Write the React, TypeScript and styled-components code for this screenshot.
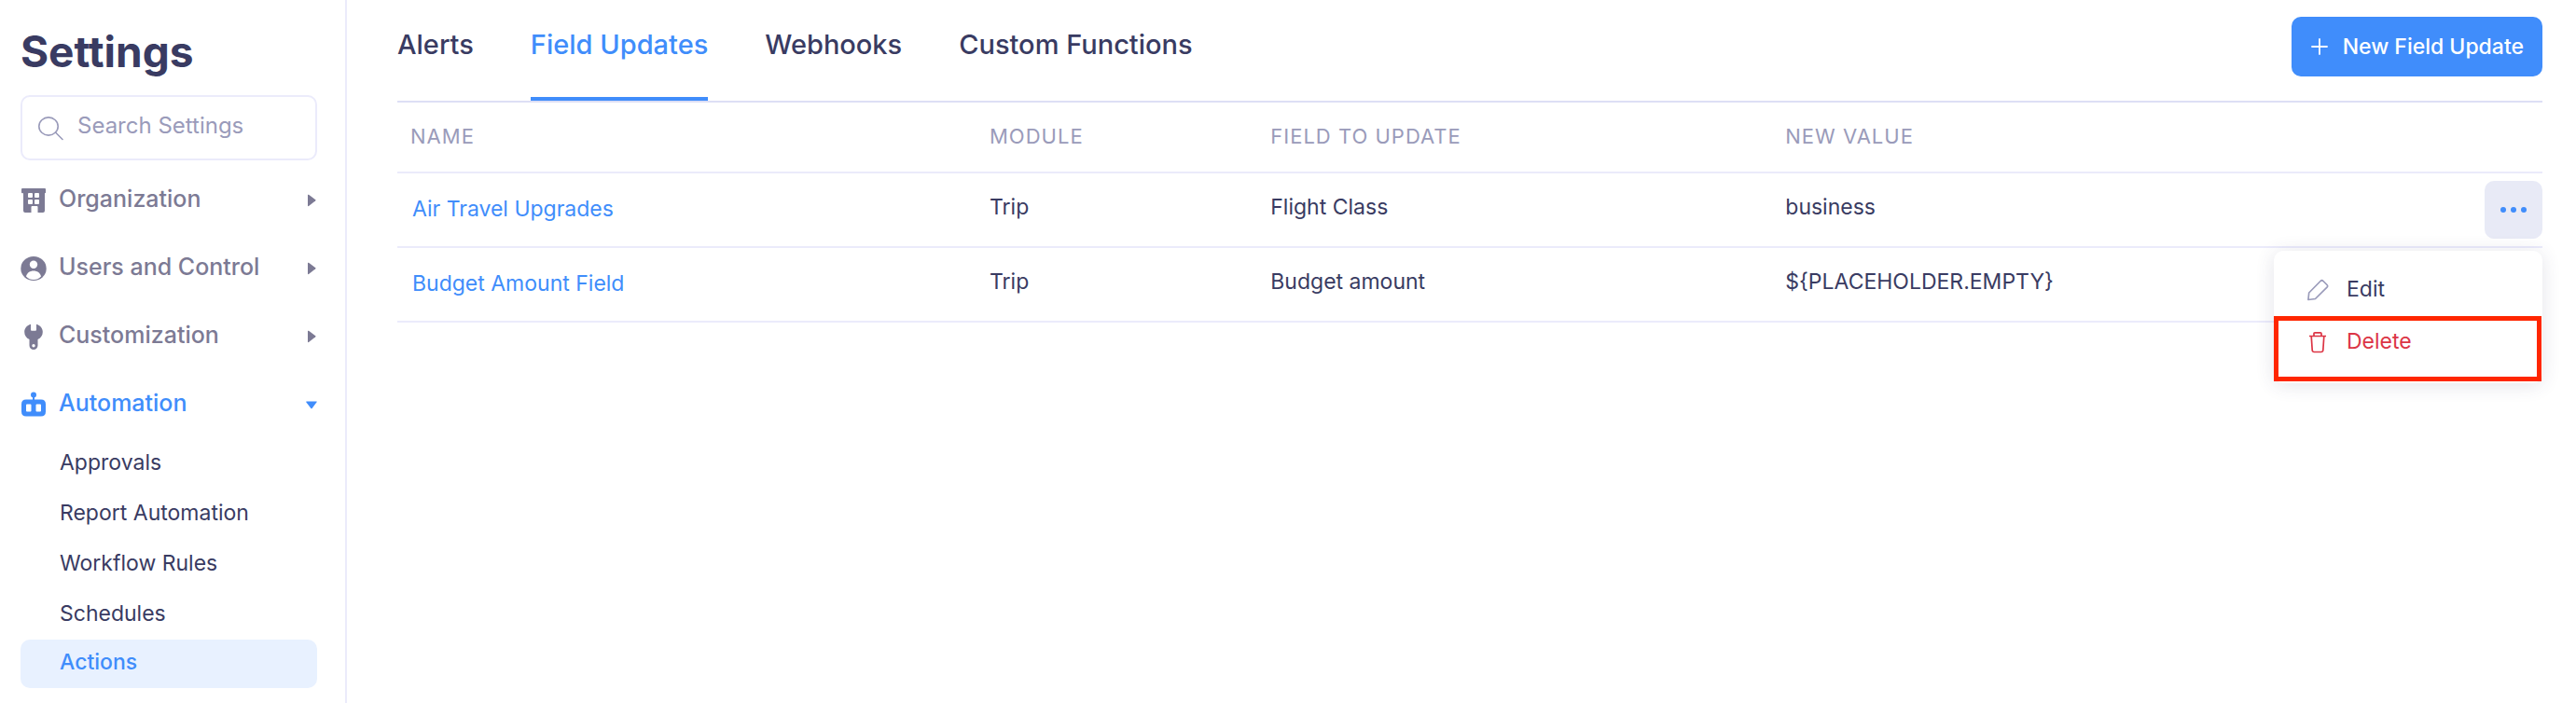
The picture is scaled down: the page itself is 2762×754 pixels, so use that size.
import React from 'react';
import styled, { createGlobalStyle } from 'styled-components';

const color = {
  ink: '#393b62',
  muted: '#7c7a94',
  faint: '#9a9bba',
  blue: '#408dfb',
  line: '#ebebfb',
  red: '#dc3545',
};

const GlobalStyle = createGlobalStyle`
  *, *::before, *::after { box-sizing: border-box; }
  body {
    margin: 0;
    background: #fff;
    color: ${color.ink};
    font-family: Inter, "Liberation Sans", sans-serif;
    font-size: 23px;
    line-height: 32px;
  }
  button, input { font: inherit; color: inherit; }
  button { border: 0; background: none; padding: 0; cursor: pointer; }
  a { color: inherit; text-decoration: none; }
  ul { list-style: none; margin: 0; padding: 0; }
  svg { display: block; flex: none; }
`;

const Page = styled.div`
  display: flex;
  min-height: 100vh;
`;

const Sidebar = styled.aside`
  flex: none;
  width: 372px;
  padding: 25px 30px 16px 22px;
  border-right: 2px solid ${color.line};
`;

const Title = styled.h1`
  margin: 0 0 17px;
  font-size: 46px;
  line-height: 60px;
  font-weight: 700;
`;

const SearchBox = styled.label`
  display: flex;
  align-items: center;
  gap: 15px;
  height: 70px;
  padding: 0 16px;
  margin-bottom: 6px;
  border: 2px solid ${color.line};
  border-radius: 10px;
  color: ${color.faint};
`;

const SearchInput = styled.input`
  flex: 1;
  min-width: 0;
  padding: 0 0 4px;
  border: 0;
  outline: 0;
  background: none;
  color: ${color.ink};
  font-size: 24px;
  &::placeholder { color: ${color.faint}; opacity: 1; }
`;

const GroupButton = styled.button<{ $open?: boolean }>`
  display: flex;
  align-items: center;
  gap: 13px;
  width: 100%;
  height: 73px;
  color: ${p => (p.$open ? color.blue : color.muted)};
  font-size: 25px;
  font-weight: 500;
  text-align: left;
`;

const GroupLabel = styled.span`
  flex: 1;
  padding-bottom: 4px;
`;

const SubList = styled.ul`
  display: grid;
  gap: 2px;
`;

const SubLink = styled.a<{ $active?: boolean }>`
  display: flex;
  align-items: center;
  height: 52px;
  padding: 0 42px ${p => (p.$active ? 4 : 0)}px;
  border-radius: 10px;
  color: ${p => (p.$active ? color.blue : color.ink)};
  background: ${p => (p.$active ? '#e8f1ff' : 'transparent')};
  font-weight: ${p => (p.$active ? 500 : 400)};
`;

const Main = styled.main`
  flex: 1;
  min-width: 0;
  padding: 0 36px 0 54px;
`;

const TopBar = styled.header`
  display: flex;
  justify-content: space-between;
  align-items: flex-start;
  height: 110px;
  border-bottom: 2px solid #dddff5;
`;

const Tabs = styled.nav`
  display: flex;
  gap: 61px;
  height: 100%;
`;

const Tab = styled.a<{ $active?: boolean }>`
  height: 100%;
  padding-top: 28px;
  border-bottom: 4px solid ${p => (p.$active ? color.blue : 'transparent')};
  color: ${p => (p.$active ? color.blue : color.ink)};
  font-size: 29px;
  line-height: 40px;
  font-weight: 500;
`;

const PrimaryButton = styled.button`
  display: flex;
  align-items: center;
  gap: 15px;
  height: 64px;
  margin-top: 18px;
  padding: 0 20px;
  border-radius: 10px;
  background: ${color.blue};
  color: #fff;
  font-weight: 500;
`;

const Table = styled.table`
  width: 100%;
  table-layout: fixed;
  border-collapse: separate;
  border-spacing: 0;
  text-align: left;
`;

const Col = styled.col<{ $share?: number }>`
  width: ${p => (p.$share ? `${p.$share}%` : 'auto')};
`;

const HeadCell = styled.th`
  height: 76px;
  padding: 0 14px 2px;
  border-bottom: 2px solid ${color.line};
  color: ${color.faint};
  font-size: 22px;
  font-weight: 400;
  letter-spacing: 1px;
`;

const Cell = styled.td`
  height: 80px;
  padding: 0 14px 6px;
  border-bottom: 2px solid ${color.line};
`;

const NameCell = styled(Cell)`
  padding: 0 16px 2px;
`;

const ActionCell = styled(Cell)`
  padding: 0;
`;

const RecordLink = styled.a`
  color: ${color.blue};
`;

const ActionAnchor = styled.div`
  position: relative;
  display: flex;
  justify-content: flex-end;
`;

const MoreButton = styled.button`
  display: grid;
  place-items: center;
  width: 62px;
  height: 62px;
  border-radius: 10px;
  background: #e8eaf6;
  color: ${color.blue};
`;

const Menu = styled.div`
  position: absolute;
  top: 75px;
  right: 0;
  width: 288px;
  height: 142px;
  padding-top: 14px;
  border-radius: 10px;
  background: #fff;
  box-shadow: 0 2px 20px rgba(57, 59, 98, 0.14);
`;

const MenuItem = styled.button<{ $danger?: boolean }>`
  display: flex;
  align-items: center;
  gap: 19px;
  width: 100%;
  height: 56px;
  padding-left: 35px;
  color: ${p => (p.$danger ? color.red : color.ink)};
  text-align: left;
`;

const MenuLabel = styled.span`
  padding-bottom: 3px;
`;

const Highlight = styled.div`
  position: absolute;
  inset: 70px 1px 2px 0;
  border: 5px solid #ff2600;
  pointer-events: none;
`;

const SearchIcon = () => (
  <svg width="28" height="28" viewBox="0 0 28 28" fill="none" stroke="currentColor" strokeWidth="1.6">
    <ellipse cx="12" cy="12.500" rx="10.2" ry="9.6" />
    <path d="M19.5 19 27 26.500" strokeLinecap="round" />
  </svg>
);

const BuildingIcon = () => (
  <svg width="28" height="28" viewBox="0 0 28 28" fill="currentColor">
    <path
      fillRule="evenodd"
      d="M2 1h24q1 0 1 1v3.500q0 .8-1 .8V25q0 2-2 2h-5.500v-6q0-1-1-1h-5q-1 0-1 1v6H5q-2 0-2-2V6.300H2q-1 0-1-.8V2q0-1 1-1zM9 6q-1 0-1 1v3q0 1 1 1h3q1 0 1-1V7q0-1-1-1zm7 0q-1 0-1 1v3q0 1 1 1h3q1 0 1-1V7q0-1-1-1zm-7 7q-1 0-1 1v3q0 1 1 1h3q1 0 1-1v-3q0-1-1-1zm7 0q-1 0-1 1v3q0 1 1 1h3q1 0 1-1v-3q0-1-1-1z"
    />
  </svg>
);

const UserIcon = () => (
  <svg width="28" height="28" viewBox="0 0 28 28">
    <ellipse cx="14" cy="14" rx="13.700" ry="13" fill="currentColor" />
    <circle cx="14" cy="9.800" r="4.200" fill="#fff" />
    <path d="M6 22.500C7 18.500 10 16.500 14 16.500s7 2 8 6C20 25 17 26 14 26s-6-1-8-3.500z" fill="#fff" />
  </svg>
);

const WrenchIcon = () => (
  <svg width="28" height="28" viewBox="0 0 28 28" fill="currentColor">
    <path
      fillRule="evenodd"
      d="M11 .8v6q0 1 1 1h4q1 0 1-1v-6c4 1.200 6.800 4.200 6.800 8.200 0 3.800-2 6.500-5.300 8v6.500a4.500 4.500 0 0 1-9 0V17c-3.300-1.500-5.300-4.200-5.300-8C4.200 5 7 2 11 .8zM14 22a1.700 1.700 0 1 0 0 3.400 1.700 1.700 0 0 0 0-3.400z"
    />
  </svg>
);

const RobotIcon = () => (
  <svg width="28" height="28" viewBox="0 0 28 28" fill="currentColor">
    <circle cx="14" cy="3.500" r="3" />
    <path d="M13 5h2v5h-2z" />
    <path
      fillRule="evenodd"
      d="M6 8.500h16q5 0 5 5v8q0 5-5 5H6q-5 0-5-5v-8q0-5 5-5zM7 13.500q-1 0-1 1v6q0 1 1 1h3.500q1 0 1-1v-6q0-1-1-1zm10.500 0q-1 0-1 1v6q0 1 1 1H21q1 0 1-1v-6q0-1-1-1z"
    />
  </svg>
);

const Caret = ({ open }: { open?: boolean }) => (
  <svg width="12" height="14" viewBox="0 0 12 14" fill="currentColor">
    {open ? <path d="M.6 3.500h10.800q.8.400 0 1L6.600 11q-.6.600-1.200 0L.4 4.500q-.5-.6.200-1z" /> : <path d="M2 1q.3-.6 1-.2l7.300 5.500q.6.500 0 1L3 13q-.7.400-1-.2z" />}
  </svg>
);

const PlusIcon = () => (
  <svg width="20" height="20" viewBox="0 0 20 20" stroke="currentColor" strokeWidth="1.800" strokeLinecap="round">
    <path d="M10 2v16M2 10h16" />
  </svg>
);

const DotsIcon = () => (
  <svg width="30" height="8" viewBox="0 0 30 8" fill="currentColor">
    <circle cx="4" cy="4" r="3" />
    <circle cx="15" cy="4" r="3" />
    <circle cx="26" cy="4" r="3" />
  </svg>
);

const PencilIcon = () => (
  <svg width="24" height="24" viewBox="0 0 24 24" fill="none" stroke={color.faint} strokeWidth="1.700" strokeLinejoin="round">
    <path d="M1.900 22.500 2.700 15 15 2.500q1.500-1.500 3 0l4 4q1.300 1.300 0 2.700L9.500 21.500z" />
  </svg>
);

const TrashIcon = () => (
  <svg width="24" height="24" viewBox="0 0 24 24" fill="none" stroke="currentColor" strokeWidth="1.700" strokeLinejoin="round">
    <path d="M3 5.500h18M8 5.500V2.800q0-1 1-1h6q1 0 1 1v2.700M5.200 5.500l1 15q.2 2 2 2h7.600q1.800 0 2-2l1-15" />
  </svg>
);

const groups = [
  { label: 'Organization', Icon: BuildingIcon },
  { label: 'Users and Control', Icon: UserIcon },
  { label: 'Customization', Icon: WrenchIcon },
  { label: 'Automation', Icon: RobotIcon, open: true },
];

const subItems = ['Approvals', 'Report Automation', 'Workflow Rules', 'Schedules', 'Actions'];
const tabs = ['Alerts', 'Field Updates', 'Webhooks', 'Custom Functions'];

const rows = [
  { name: 'Air Travel Upgrades', module: 'Trip', field: 'Flight Class', value: 'business', menu: true },
  { name: 'Budget Amount Field', module: 'Trip', field: 'Budget amount', value: '${PLACEHOLDER.EMPTY}' },
];

export default function App() {
  return (
    <>
      <GlobalStyle />
      <Page>
        <Sidebar>
          <Title>Settings</Title>
          <SearchBox>
            <SearchIcon />
            <SearchInput type="text" placeholder="Search Settings" aria-label="Search Settings" />
          </SearchBox>
          <nav>
            {groups.map(({ label, Icon, open }) => (
              <GroupButton key={label} type="button" $open={open} aria-expanded={!!open}>
                <Icon />
                <GroupLabel>{label}</GroupLabel>
                <Caret open={open} />
              </GroupButton>
            ))}
            <SubList>
              {subItems.map(item => (
                <li key={item}>
                  <SubLink href="#" $active={item === 'Actions'}>{item}</SubLink>
                </li>
              ))}
            </SubList>
          </nav>
        </Sidebar>
        <Main>
          <TopBar>
            <Tabs>
              {tabs.map(tab => (
                <Tab key={tab} href="#" $active={tab === 'Field Updates'}>{tab}</Tab>
              ))}
            </Tabs>
            <PrimaryButton type="button">
              <PlusIcon />
              New Field Update
            </PrimaryButton>
          </TopBar>
          <Table>
            <colgroup>
              <Col $share={27} />
              <Col $share={13.1} />
              <Col $share={24} />
              <Col />
              <Col $share={4} />
            </colgroup>
            <thead>
              <tr>
                <HeadCell>NAME</HeadCell>
                <HeadCell>MODULE</HeadCell>
                <HeadCell>FIELD TO UPDATE</HeadCell>
                <HeadCell>NEW VALUE</HeadCell>
                <HeadCell aria-label="Row actions" />
              </tr>
            </thead>
            <tbody>
              {rows.map(row => (
                <tr key={row.name}>
                  <NameCell>
                    <RecordLink href="#">{row.name}</RecordLink>
                  </NameCell>
                  <Cell>{row.module}</Cell>
                  <Cell>{row.field}</Cell>
                  <Cell>{row.value}</Cell>
                  <ActionCell>
                    {row.menu && (
                      <ActionAnchor>
                        <MoreButton type="button" aria-label="More actions" aria-expanded>
                          <DotsIcon />
                        </MoreButton>
                        <Menu>
                          <MenuItem type="button">
                            <PencilIcon />
                            <MenuLabel>Edit</MenuLabel>
                          </MenuItem>
                          <MenuItem type="button" $danger>
                            <TrashIcon />
                            <MenuLabel>Delete</MenuLabel>
                          </MenuItem>
                          <Highlight />
                        </Menu>
                      </ActionAnchor>
                    )}
                  </ActionCell>
                </tr>
              ))}
            </tbody>
          </Table>
        </Main>
      </Page>
    </>
  );
}
